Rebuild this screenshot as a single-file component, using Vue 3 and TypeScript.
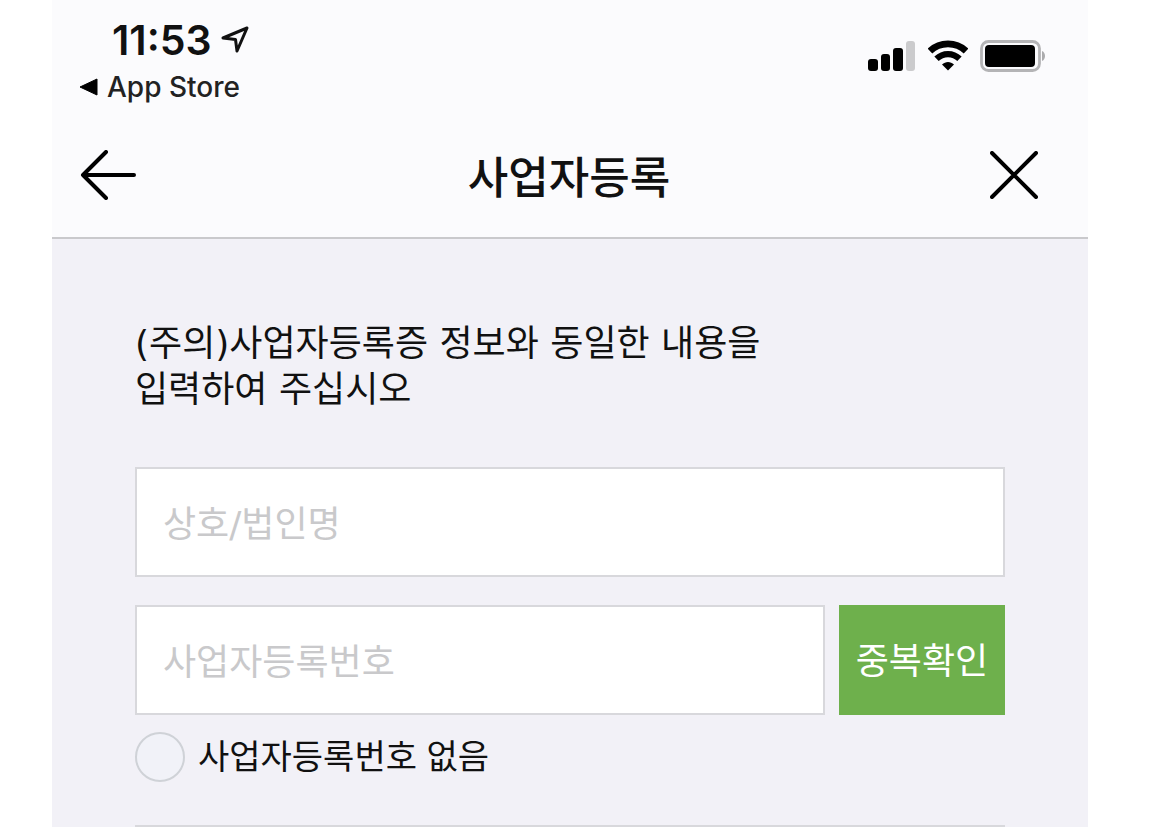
<script setup lang="ts">
import { ref } from 'vue'

const companyName = ref('')
const registrationNumber = ref('')
const noNumber = ref<string | null>(null)
const nextValue = ref('')
</script>

<template>
  <div class="screen">
    <header class="top">
      <div class="status">
        <div class="status-left">
          <div class="clock">
            <span class="time">11:53</span>
            <svg class="location" width="28" height="28" viewBox="0 0 28 28" aria-hidden="true">
              <path d="M2 12 L26 2 L16 25 L14.500 13.500 Z" fill="none" stroke="#111" stroke-width="3" stroke-linejoin="round" />
            </svg>
          </div>
          <a class="return" href="#">
            <svg width="19" height="18" viewBox="0 0 19 18" aria-hidden="true">
              <path d="M1 9 L18 1 V17 Z" fill="#000" stroke="#000" stroke-linejoin="round" />
            </svg>
            <span>App Store</span>
          </a>
        </div>
        <div class="status-right">
          <svg width="48" height="32" viewBox="0 0 48 32" aria-hidden="true">
            <rect x="0" y="19" width="10" height="12" rx="3" />
            <rect x="13" y="14" width="9" height="17" rx="3" />
            <rect x="25" y="8" width="10" height="23" rx="3" />
            <rect x="38" y="1" width="9" height="30" rx="3" fill="#cbcbcd" />
          </svg>
          <svg width="40" height="32" viewBox="0 0 40 32" aria-hidden="true">
            <g fill="none" stroke="#000">
              <path d="M2 11 C12 1.500 28 1.500 38 11" stroke-width="6.600" />
              <path d="M8.500 18.800 C15 12.500 25 12.500 31.500 18.800" stroke-width="6.200" />
            </g>
            <path d="M14 24.500 C17.500 21 22.500 21 26 24.500 L20 30.500 Z" />
          </svg>
          <svg width="66" height="32" viewBox="0 0 66 32" aria-hidden="true">
            <rect x="1.500" y="1.500" width="58" height="29" rx="7" fill="none" stroke="#b4b4b6" stroke-width="2.800" />
            <rect x="5" y="5" width="50" height="22" rx="4" />
            <path d="M62 11 C66 12.500 66 19.500 62 21 Z" fill="#ababad" />
          </svg>
        </div>
      </div>
      <nav class="bar">
        <button class="icon-button" type="button">
          <svg width="56" height="50" viewBox="0 0 56 50" aria-hidden="true">
            <path d="M26 2 L3 25 L26 48 M3 25 H54" fill="none" stroke="#000" stroke-width="4" stroke-linecap="round" stroke-linejoin="round" />
          </svg>
        </button>
        <h1>사업자등록</h1>
        <button class="icon-button close" type="button">
          <svg width="48" height="48" viewBox="0 0 48 48" aria-hidden="true">
            <path d="M2 2 L46 46 M46 2 L2 46" fill="none" stroke="#000" stroke-width="4" stroke-linecap="round" />
          </svg>
        </button>
      </nav>
    </header>

    <main>
      <p id="notice" class="notice">(주의)사업자등록증 정보와 동일한 내용을<br />입력하여 주십시오</p>
      <form @submit.prevent>
        <input v-model="companyName" class="field" type="text" placeholder="상호/법인명" />
        <div class="row">
          <input v-model="registrationNumber" class="field" type="text" placeholder="사업자등록번호" />
          <button class="check" type="button">중복확인</button>
        </div>
        <label class="option" for="no-number">
          <input id="no-number" v-model="noNumber" type="radio" value="none" />
          <span>사업자등록번호 없음</span>
        </label>
        <input v-model="nextValue" class="field" type="text" aria-labelledby="notice" />
      </form>
    </main>
  </div>
</template>

<style>
body {
  background: #fff;
}
</style>

<style scoped>
.screen {
  box-sizing: border-box;
  height: 100vh;
  overflow: hidden;
  margin: 0 75px 0 52px;
  background: #f2f1f7;
  color: #111;
  font-family: "DejaVu Sans", "Noto Sans CJK KR", sans-serif;
}
.top {
  background: #fbfbfd;
  border-bottom: 2px solid #c9c9cc;
}
.status {
  display: flex;
  justify-content: space-between;
  align-items: flex-start;
  padding: 16px 42px 0 27px;
  font-family: Inter, sans-serif;
}
.clock {
  display: flex;
  align-items: center;
  gap: 9px;
  padding-left: 33px;
}
.time {
  font-size: 41px;
  line-height: 48px;
  font-weight: 600;
}
.return {
  display: flex;
  align-items: center;
  gap: 9px;
  margin-top: 6px;
  color: #222;
  font-size: 28px;
  line-height: 34px;
  font-weight: 500;
  text-decoration: none;
}
.status-right {
  display: flex;
  align-items: center;
  gap: 12px;
  margin-top: 24px;
}
.bar {
  display: grid;
  box-sizing: border-box;
  grid-template-columns: 60px 1fr 60px;
  align-items: center;
  height: 133px;
  padding: 8px 50px 0 28px;
}
.icon-button {
  display: flex;
  justify-content: flex-start;
  padding: 0;
  border: 0;
  background: none;
}
.close {
  justify-content: flex-end;
}
h1 {
  margin: 0;
  padding-left: 20px;
  text-align: center;
  font-size: 44px;
  line-height: 60px;
  font-weight: 500;
  font-family: "Noto Sans CJK KR", sans-serif;
}
main {
  padding: 82px 83px 0;
}
.notice {
  margin: 0;
  font-size: 36px;
  line-height: 46px;
}
form {
  display: flex;
  flex-direction: column;
  margin-top: 54px;
}
.field {
  box-sizing: border-box;
  width: 100%;
  min-width: 0;
  height: 110px;
  padding: 4px 26px 0;
  border: 2px solid #d8d8dc;
  border-radius: 0;
  background: #fff;
  color: #111;
  font-family: inherit;
  font-size: 36px;
  outline: none;
}
.field::placeholder {
  color: #c9c9cb;
  opacity: 1;
}
.row {
  display: flex;
  gap: 14px;
  margin-top: 28px;
}
.row .field {
  flex: 1;
}
.check {
  flex: 0 0 166px;
  padding: 0 0 4px;
  border: 0;
  background: #6eb04c;
  color: #fff;
  font-family: inherit;
  font-size: 36px;
}
.option {
  display: flex;
  align-items: center;
  gap: 13px;
  margin: 17px 0 43px;
  font-family: "Liberation Sans", "Noto Sans CJK KR", sans-serif;
  font-size: 34px;
  line-height: 50px;
}
.option input {
  appearance: none;
  box-sizing: border-box;
  width: 50px;
  height: 50px;
  margin: 0;
  border: 2px solid #cfd2d7;
  border-radius: 50%;
  background: #f1f2f8;
}
.option input:checked {
  background: #6eb04c;
}
</style>
